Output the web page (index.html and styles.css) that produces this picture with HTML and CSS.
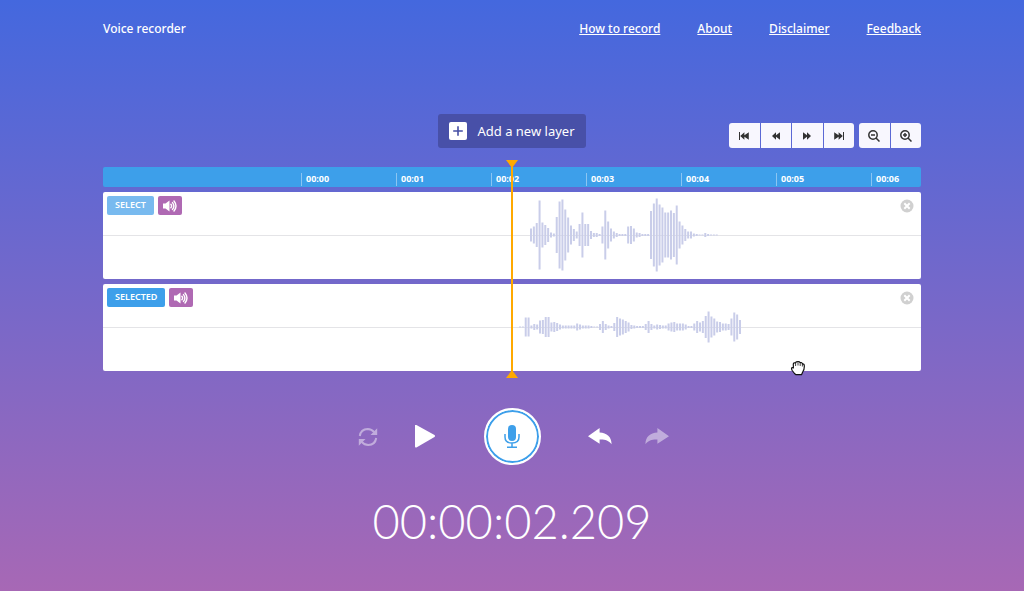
FILE: index.html
```html
<!DOCTYPE html>
<html lang="en">
<head>
<meta charset="utf-8">
<meta name="viewport" content="width=device-width, initial-scale=1">
<title>Voice recorder</title>
<link rel="stylesheet" href="styles.css">
</head>
<body>
<svg class="sprite" aria-hidden="true">
  <symbol id="volume" viewBox="0 0 14 12">
    <path fill="currentColor" d="M0 3.500h2.500L6.500.5v11L2.500 8.500H0z"/>
    <path fill="none" stroke="currentColor" stroke-width="1.400" stroke-linecap="round" d="M7.900 4.300q1.400 1.700 0 3.400M9.500 2.600q2.800 3.400 0 6.800M11 1q4 5 0 10"/>
  </symbol>
  <symbol id="close" viewBox="0 0 14 14">
    <circle cx="7" cy="7" r="6.500" fill="#d0d0d0"/>
    <path stroke="#fff" stroke-width="2" d="M4.300 4.300l5.400 5.400M9.700 4.300L4.300 9.700"/>
  </symbol>
  <symbol id="reply" viewBox="0 0 24 18">
    <path fill="currentColor" d="M0 8.200L11.600 0v4.600C19 5 23.400 9 23.600 16.200 20.500 12.200 17 11.200 11.600 11.400V15.800z"/>
  </symbol>
</svg>

<header class="header">
  <span class="brand">Voice recorder</span>
  <nav class="nav">
    <a href="#how">How to record</a>
    <a href="#about">About</a>
    <a href="#disclaimer">Disclaimer</a>
    <a href="#feedback">Feedback</a>
  </nav>
</header>

<main class="main">
  <div class="toolbar">
    <button class="add" type="button">
      <svg width="18" height="18" viewBox="0 0 18 18" aria-hidden="true"><rect width="18" height="18" rx="2" fill="#fff"/><path stroke="#464fa5" stroke-width="1.600" d="M9 4.200v9.600M4.200 9h9.600"/></svg>
      Add a new layer
    </button>
    <div class="tools">
      <div class="group seek">
        <button type="button" aria-label="To start"><svg width="10" height="8" viewBox="0 0 10 8"><path d="M0 0h1v8H0zM1.200 4L5.400.3v2.900L9.800.3v7.400L5.400 4.800v2.900z"/></svg></button>
        <button type="button" aria-label="Rewind"><svg width="10" height="8" viewBox="0 0 10 8"><path d="M1 4L5 .3v2.900L9 .3v7.400L5 4.800v2.900z"/></svg></button>
        <button type="button" aria-label="Forward"><svg width="10" height="8" viewBox="0 0 10 8"><path d="M9 4L5 .3v2.900L1 .3v7.400l4-2.900v2.900z"/></svg></button>
        <button type="button" aria-label="To end"><svg width="10" height="8" viewBox="0 0 10 8"><path d="M10 0H9v8h1zM8.800 4L4.600.3v2.900L.2.3v7.400l4.400-2.900v2.900z"/></svg></button>
      </div>
      <div class="group zoom">
        <button type="button" aria-label="Zoom out"><svg class="lens" width="12" height="12" viewBox="0 0 12 12"><circle cx="5" cy="5" r="4.200"/><path d="M8 8l3.500 3.500M3 5h4"/></svg></button>
        <button type="button" aria-label="Zoom in"><svg class="lens" width="12" height="12" viewBox="0 0 12 12"><circle cx="5" cy="5" r="4.200"/><path d="M8 8l3.500 3.500M3 5h4M5 3v4"/></svg></button>
      </div>
    </div>
  </div>

  <section class="timeline" aria-label="Timeline">
    <div class="ruler">
      <span>00:00</span><span>00:01</span><span>00:02</span><span>00:03</span><span>00:04</span><span>00:05</span><span>00:06</span>
    </div>
    <div class="lane">
      <svg class="wave wave-first" data-levels="13 17 24 69 25 20 14 5 3 36 67 71 51 35 19 12 7 22 45 22 22 8 4 4 2 17 49 27 13 7 4 2 2 2 17 18 13 5 4 2 2 2 48 63 73 61 55 45 45 49 44 59 27 19 12 7 7 3 2 1 1 4 2 1 1 1"></svg>
      <div class="lane-tools">
        <button class="select" type="button">SELECT</button>
        <button class="mute" type="button" aria-label="Mute"><svg width="14" height="12"><use href="#volume"/></svg></button>
      </div>
      <button class="close" type="button" aria-label="Remove layer"><svg width="14" height="14"><use href="#close"/></svg></button>
    </div>
    <div class="lane">
      <svg class="wave wave-second" data-levels="1 1 19 19 3 6 5 13 14 20 20 9 10 8 5 3 3 3 3 3 7 5 3 3 3 2 1 1 6 12 6 3 2 8 20 17 15 12 9 4 3 2 2 2 6 12 6 3 5 4 3 3 7 9 10 7 7 7 5 2 2 7 12 9 12 22 31 21 17 11 10 7 7 6 17 29 25 14"></svg>
      <div class="lane-tools">
        <button class="select is-selected" type="button">SELECTED</button>
        <button class="mute" type="button" aria-label="Mute"><svg width="14" height="12"><use href="#volume"/></svg></button>
      </div>
      <button class="close" type="button" aria-label="Remove layer"><svg width="14" height="14"><use href="#close"/></svg></button>
    </div>
    <div class="playhead"></div>
    <svg class="hand" width="14" height="15" viewBox="0 0 14 15" aria-hidden="true"><path fill="#fff" stroke="#111" stroke-width="1.200" stroke-linejoin="round" d="M3.500 12.500L1.200 9.500Q0 7.200 1.200 6.500l1.200.5L2.300 3Q3 1.200 4.500 2 5 .3 7 .8 8 .2 9.200 1.700 11 1 11.500 3 13.200 2.700 13.300 4.700q.2 4-1.600 6.300l-1.200 2.700H5z"/><path stroke="#111" stroke-width=".8" d="M4.600 2.200V5M7 1.500v3M9.200 2v3M11.400 3v2.500"/></svg>
  </section>

  <div class="controls">
    <button class="dim" type="button" aria-label="Loop"><svg width="20" height="20" viewBox="0 0 20 20"><path fill="none" stroke="currentColor" stroke-width="2" d="M1.800 9Q2.800 2.200 9.700 2q4 0 6.500 3.200M18.200 11q-1 6.800-7.900 7-4 0-6.500-3.200"/><path fill="currentColor" d="M19.200 1.200v6.700h-6.700zM.8 18.800v-6.700h6.700z"/></svg></button>
    <button class="play" type="button" aria-label="Play"><svg width="22" height="24" viewBox="0 0 22 24"><path fill="currentColor" d="M1 .5Q1-.6 2.400 0L20.500 10q1 1 0 2L2.400 22.400Q1 23 1 21.500z"/></svg></button>
    <button class="record" type="button" aria-label="Record"><svg width="16" height="24" viewBox="0 0 16 24"><rect x="4" y="0" width="8" height="16" rx="4" fill="currentColor"/><path fill="none" stroke="currentColor" stroke-width="1.500" d="M1 9v3q0 6 7 6t7-6V9M8 18v4M3 22.200h10"/></svg></button>
    <button type="button" aria-label="Undo"><svg width="24" height="18"><use href="#reply"/></svg></button>
    <button class="dim" type="button" aria-label="Redo"><svg class="mirror" width="24" height="18"><use href="#reply"/></svg></button>
  </div>

  <div class="clock">00:00:02.209</div>
</main>
<script src="wave.js"></script>
</body>
</html>
```

FILE: styles.css
```css
* { box-sizing: border-box; }

body {
  margin: 0;
  min-height: 100vh;
  padding: 0 103px;
  background: linear-gradient(#4468de, #a768b5) no-repeat;
  color: #fff;
  font-family: "Noto Sans", "Open Sans", sans-serif;
  font-size: 12px;
  font-weight: 500;
}

button {
  display: flex;
  align-items: center;
  justify-content: center;
  margin: 0;
  padding: 0;
  border: 0;
  background: none;
  color: inherit;
  font: inherit;
  cursor: pointer;
}

svg { display: block; flex: none; }
.sprite { position: absolute; width: 0; height: 0; }

.header {
  display: flex;
  justify-content: space-between;
  padding-top: 20px;
  line-height: 18px;
}

.nav { display: flex; gap: 37px; }
.nav a { color: inherit; text-underline-offset: 1px; }

.toolbar {
  display: grid;
  grid-template-columns: 1fr auto 1fr;
  align-items: end;
  margin-top: 76px;
}

.add {
  grid-column: 2;
  gap: 10px;
  height: 34px;
  padding: 0 11px;
  border-radius: 3px;
  background: #4850a8;
  font-size: 13px;
  font-weight: 400;
}

.tools { display: flex; justify-content: flex-end; gap: 5px; }
.group { display: flex; gap: 1px; border-radius: 3px; overflow: hidden; }
.seek { width: 125px; }
.zoom { width: 62px; }

.group button {
  flex: 1;
  height: 25px;
  background: #f8f7fe;
  color: #333;
}

.group svg { fill: currentColor; }
.group .lens { fill: none; stroke: currentColor; stroke-width: 1.5px; }

.timeline {
  position: relative;
  display: grid;
  gap: 5px;
  margin-top: 19px;
}

.ruler {
  display: grid;
  grid-template-columns: repeat(7, 95px);
  align-items: end;
  height: 20px;
  padding: 0 0 1px 198px;
  border-radius: 2px;
  background: #3d9fea;
  overflow: hidden;
}

.ruler span {
  padding: 0 0 2px 4px;
  border-left: 1px solid #8bc5f2;
  font-size: 9px;
  font-weight: 700;
  line-height: 11px;
}

.lane {
  position: relative;
  display: flex;
  align-items: flex-start;
  justify-content: space-between;
  height: 87px;
  padding: 4px;
  border-radius: 2px;
  background: linear-gradient(#e4e4e7, #e4e4e7) 0 43px / 100% 1px no-repeat #fff;
}

.lane-tools { display: flex; gap: 4px; }

.select {
  height: 19px;
  padding: 0 8px 2px;
  border-radius: 2px;
  background: #78baef;
  font-size: 9px;
  font-weight: 600;
}

.select.is-selected { background: #3d9fea; }

.mute {
  width: 24px;
  height: 19px;
  border-radius: 2px;
  background: #af69b3;
}

.close { padding: 3px; }

.wave { position: absolute; top: 6px; height: 74px; fill: #c9cde9; }
.wave-first { left: 427px; }
.wave-second { left: 416px; }

.playhead {
  position: absolute;
  top: -6px;
  bottom: -6px;
  left: 50%;
  width: 2px;
  background: #ffa900;
  transform: translateX(-50%);
}

.playhead::before,
.playhead::after {
  content: "";
  position: absolute;
  left: -5px;
  border: 6px solid transparent;
}

.playhead::before { top: -1px; border-top: 8px solid #ffa900; border-bottom: 0; }
.playhead::after { bottom: -1px; border-bottom: 8px solid #ffa900; border-top: 0; }

.hand { position: absolute; left: 688px; bottom: -5px; }

.controls {
  display: flex;
  align-items: center;
  justify-content: center;
  gap: 33px;
  margin-top: 37px;
}

.controls button { width: 24px; height: 24px; }
.controls .dim { opacity: 0.45; }

.controls .record {
  width: 57px;
  height: 57px;
  margin: 0 14px;
  border: 2px solid #fff;
  border-radius: 50%;
  background: #fff;
  box-shadow: inset 0 0 0 2px #3d9fea;
  color: #3d9fea;
}

.mirror { transform: scaleX(-1); }

.clock {
  margin-top: 27px;
  font-family: Lato, sans-serif;
  font-size: 47px;
  font-weight: 300;
  line-height: 58px;
  text-align: center;
}
```

FILE: wave.js
```javascript
const PITCH = 20 / 7;
const HEIGHT = 74;

document.querySelectorAll(".wave").forEach((svg) => {
  const levels = svg.dataset.levels.split(" ").map(Number);
  svg.setAttribute("width", Math.ceil(levels.length * PITCH));
  levels.forEach((level, i) => {
    const bar = document.createElementNS("http://www.w3.org/2000/svg", "rect");
    bar.setAttribute("x", i * PITCH);
    bar.setAttribute("y", (HEIGHT - level) / 2);
    bar.setAttribute("width", 2);
    bar.setAttribute("height", level);
    svg.append(bar);
  });
});
```
